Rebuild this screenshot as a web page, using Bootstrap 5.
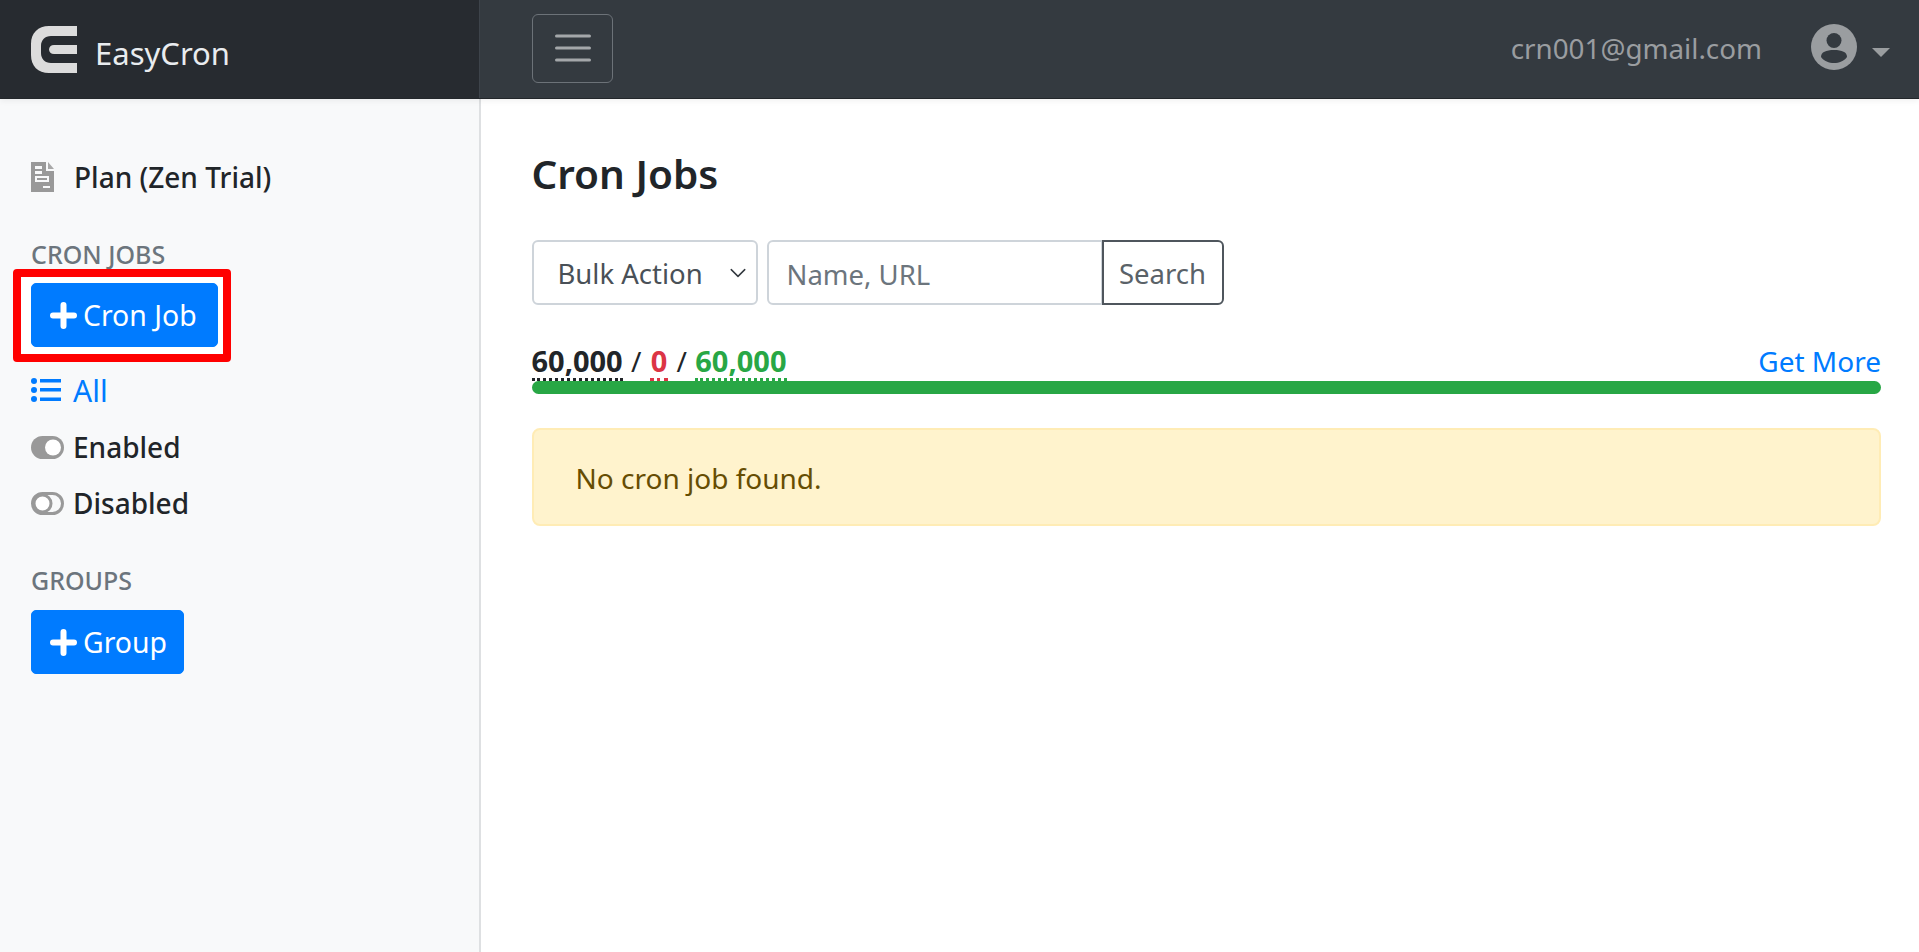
<!DOCTYPE html>
<html lang="en">
<head>
<meta charset="utf-8">
<title>EasyCron</title>
<link href="https://cdn.jsdelivr.net/npm/bootstrap@5.3.0/dist/css/bootstrap.min.css" rel="stylesheet">
<style>
html,body{height:100%;overflow:hidden}
body{font-family:"Noto Sans","Open Sans",sans-serif;font-size:28px;color:#212529;background:#fff}
.ec-shell{height:952px;display:flex;flex-direction:column}
.ec-top{height:99px;flex:none;display:flex;background:#343a40;border-bottom:1px solid #23272b;box-shadow:0 2px 6px rgba(0,0,0,.06);z-index:2}
.ec-brand{width:480px;flex:none;background:#272b30;display:flex;align-items:center;padding-left:31px;gap:18px;color:#e9ecef;font-size:31px;text-decoration:none;border-right:1px solid #3d434a}
.ec-brand span{padding-top:9px}
.ec-bar{flex:1;display:flex;align-items:center;padding:0 29px 0 52px}
.ec-toggle{width:81px;height:69px;border:1.5px solid #6c7278;border-radius:6px;background:transparent;padding:0;display:flex;align-items:center;justify-content:center;margin-top:-2px}
.ec-mail{color:#9a9da0;font-size:27.800px;margin-right:49px}
.ec-caret{width:0;height:0;border-left:9px solid transparent;border-right:9px solid transparent;border-top:9px solid #9a9da0;margin-left:15px;margin-top:6px}
.ec-avatar{margin-top:-4px}
.ec-main{flex:1;display:flex;min-height:0}
.ec-side{width:481px;flex:none;background:#f8f9fa;border-right:2px solid #dee0e2;padding:58px 0 0 31px}
.ec-item{display:flex;align-items:center;color:#212529;font-weight:500;text-decoration:none;height:40px}
.ec-item svg{flex:none}
.ec-label{font-size:25px;font-weight:500;color:#6c757d;line-height:28px;text-transform:uppercase}
.ec-mark{display:inline-block;border:8px solid #f00;border-radius:4px;background:#fff;padding:6px 5px 7px 10px;margin-left:-18px;margin-top:1px}
.ec-btn{display:inline-flex;align-items:center;justify-content:flex-start;gap:6px;height:64px;padding:0 0 0 18px;font-size:28.400px;background:#007bff;border-color:#007bff;border-radius:5px}
.ec-btn-job{width:187px}
.ec-btn-group{width:153px}
.ec-content{flex:1;padding:0 38px 0 50.500px;min-width:0}
.ec-title{font-size:40.500px;font-weight:600;line-height:50px;margin:50px 0 0}
.ec-tools{display:flex;margin-top:41px;height:65px}
.ec-select{width:226px;height:65px;font-size:27.500px;color:#495057;padding:3px 40px 0 24px;margin-right:9px;border:2px solid #ced4da;border-radius:6px;background-image:url("data:image/svg+xml,%3csvg xmlns='http://www.w3.org/2000/svg' viewBox='0 0 16 16'%3e%3cpath fill='none' stroke='%23343a40' stroke-linecap='round' stroke-linejoin='round' stroke-width='1.300' d='M2 5l6 6 6-6'/%3e%3c/svg%3e");background-position:right 8px center;background-size:20px 18px}
.ec-group{width:457px;flex-wrap:nowrap}
.ec-input{height:65px;font-size:27.500px;color:#495057;padding:3px 18px 0;border:2px solid #ced4da}
.ec-input::placeholder{color:#6c757d}
.ec-search{font-size:27.500px;height:65px;width:122px;padding:3px 0 0;color:#5a6268;border:2px solid #4f565d;background:#fff}
.ec-stats{display:flex;justify-content:space-between;align-items:flex-end;margin-top:36px;height:40px;line-height:40px;word-spacing:1px}
.ec-num{font-weight:700;font-size:29px;border-bottom:3px dotted currentColor;display:inline-block;line-height:34px;height:37px}
.ec-green{color:#28a745}
.ec-red{color:#dc3545;padding:0 1px}
.ec-more{color:#007bff;text-decoration:none;word-spacing:0}
.ec-progress{height:13px;border-radius:7px;background:#e9ecef}
.ec-progress .progress-bar{background:#28a745}
.ec-alert{margin-top:34px;height:98px;padding:2px 42px 0;display:flex;align-items:center;border-radius:8px;margin-bottom:0;background:#fff3cd;border:2px solid #ffecb5;color:#664d03}
</style>
</head>
<body>
<div class="ec-shell">
  <header class="ec-top">
    <a class="ec-brand" href="#">
      <svg width="46" height="47" viewBox="0 0 46 47"><path fill="#dcdcdc" d="M46 0H18C7 0 0 7 0 18V29C0 40 7 47 18 47H46V37H20C14 37 10 33 10 27V20C10 14 14 10 20 10H46Z"/><path fill="#dcdcdc" d="M23 19H46V28H23C20 28 18 26 18 23.500S20 19 23 19Z"/></svg>
      <span>EasyCron</span>
    </a>
    <div class="ec-bar">
      <button class="ec-toggle" type="button" aria-label="Toggle">
        <svg width="36" height="28" viewBox="0 0 36 28"><path stroke="#a4a7aa" stroke-width="3" stroke-linecap="round" d="M1.500 2H34.500M1.500 14H34.500M1.500 26H34.500"/></svg>
      </button>
      <div class="ms-auto d-flex align-items-center">
        <span class="ec-mail">crn001@gmail.com</span>
        <svg class="ec-avatar" width="46" height="46" viewBox="0 0 46 46"><circle cx="23" cy="23" r="23" fill="#9a9da0"/><circle cx="23" cy="16.500" r="7.500" fill="#343a40"/><path fill="#343a40" d="M10 33C10 28 15 26 23 26S36 28 36 33C33 37 28 39 23 39S13 37 10 33Z"/></svg>
        <span class="ec-caret"></span>
      </div>
    </div>
  </header>
  <div class="ec-main">
    <aside class="ec-side">
      <a class="ec-item" href="#">
        <svg style="margin-right:20px" width="23" height="30" viewBox="0 0 23 30"><path fill="#999" fill-rule="evenodd" d="M0 0H15V9H23V30H0Z M4 4V7H11V4Z M4 9V12H11V9Z M4 14V20H18V14Z M6 16H16V18H6Z M12 24V26H19V24Z"/><path fill="#a8a8a8" d="M17 0L23 7H17Z"/></svg>
        <span>Plan (Zen Trial)</span>
      </a>
      <div class="ec-label" style="margin-top:43px">Cron Jobs</div>
      <div class="ec-mark">
        <a class="btn btn-primary ec-btn ec-btn-job" href="#">
          <svg width="27" height="27" viewBox="0 0 27 27"><path stroke="#fff" stroke-width="6" stroke-linecap="round" d="M13.500 3V24M3 13.500H24"/></svg>
          <span>Cron Job</span>
        </a>
      </div>
      <a class="ec-item mt-2" href="#">
        <svg style="margin-right:12px" width="30" height="24" viewBox="0 0 30 24"><g fill="#007bff"><circle cx="3" cy="3" r="3"/><circle cx="3" cy="12" r="3"/><circle cx="3" cy="21" r="3"/><rect x="9" y="1" width="21" height="3.500"/><rect x="9" y="10" width="21" height="3.500"/><rect x="9" y="19.500" width="21" height="3.500"/></g></svg>
        <span class="fw-normal" style="color:#007bff;font-size:30px">All</span>
      </a>
      <a class="ec-item" style="margin-top:17px" href="#">
        <svg style="margin-right:9px" width="33" height="23" viewBox="0 0 33 23"><rect width="33" height="23" rx="11.500" fill="#999"/><circle cx="22" cy="11.500" r="8" fill="#fff"/></svg>
        <span>Enabled</span>
      </a>
      <a class="ec-item" style="margin-top:16px" href="#">
        <svg style="margin-right:9px" width="33" height="23" viewBox="0 0 33 23"><rect x="1.500" y="1.500" width="30" height="20" rx="10" fill="#f8f9fa" stroke="#999" stroke-width="3"/><circle cx="11.500" cy="11.500" r="8.500" fill="#fff" stroke="#999" stroke-width="3"/></svg>
        <span>Disabled</span>
      </a>
      <div class="ec-label" style="margin-top:43px;margin-bottom:16px">Groups</div>
      <a class="btn btn-primary ec-btn ec-btn-group" href="#">
        <svg width="27" height="27" viewBox="0 0 27 27"><path stroke="#fff" stroke-width="6" stroke-linecap="round" d="M13.500 3V24M3 13.500H24"/></svg>
        <span>Group</span>
      </a>
    </aside>
    <main class="ec-content">
      <h1 class="ec-title">Cron Jobs</h1>
      <div class="ec-tools">
        <select class="form-select ec-select" aria-label="Bulk action"><option>Bulk Action</option></select>
        <div class="input-group ec-group">
          <input class="form-control ec-input" type="text" placeholder="Name, URL">
          <button class="btn ec-search" type="button">Search</button>
        </div>
      </div>
      <div class="ec-stats">
        <div><span class="ec-num">60,000</span> / <span class="ec-num ec-red">0</span> / <span class="ec-num ec-green">60,000</span></div>
        <a class="ec-more" href="#">Get More</a>
      </div>
      <div class="progress ec-progress"><div class="progress-bar" role="progressbar" style="width:100%"></div></div>
      <div class="alert alert-warning ec-alert" role="alert">No cron job found.</div>
    </main>
  </div>
</div>
<script src="https://cdn.jsdelivr.net/npm/bootstrap@5.3.0/dist/js/bootstrap.bundle.min.js"></script>
</body>
</html>
